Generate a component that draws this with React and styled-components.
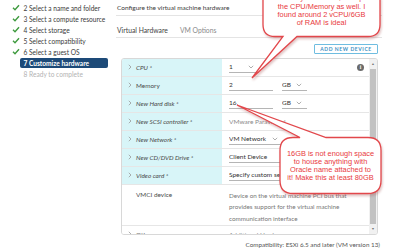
import React from 'react';
import styled, { createGlobalStyle } from 'styled-components';

const GlobalStyle = createGlobalStyle`
  html, body {
    margin: 0;
    padding: 0;
    background: #fff;
    overflow: hidden;
  }
  body {
    font-family: Lato, "Open Sans", sans-serif;
    color: #333;
  }
`;

const steps = [
  { n: 2, label: 'Select a name and folder', done: true },
  { n: 3, label: 'Select a compute resource', done: true },
  { n: 4, label: 'Select storage', done: true },
  { n: 5, label: 'Select compatibility', done: true },
  { n: 6, label: 'Select a guest OS', done: true },
  { n: 7, label: 'Customize hardware', active: true },
  { n: 8, label: 'Ready to complete', disabled: true },
];

function Check() {
  return (
    <svg width="8" height="7" viewBox="0 0 8 7">
      <path d="M1 3.8 L3 5.7 L7 1.2" fill="none" stroke="#3d9a3d" strokeWidth="1.4" />
    </svg>
  );
}

function Chevron() {
  return (
    <svg width="4" height="6" viewBox="0 0 4 6">
      <path d="M0.8 0.8 L3 3 L0.8 5.2" fill="none" stroke="#999" strokeWidth="0.8" />
    </svg>
  );
}

function Caret() {
  return (
    <svg width="6" height="4" viewBox="0 0 6 4">
      <path d="M0.8 0.8 L3 3 L5.2 0.8" fill="none" stroke="#9a9a9a" strokeWidth="0.8" />
    </svg>
  );
}

const rows = [
  { label: 'CPU *', italic: true, kind: 'select', value: '1', width: 30, info: true },
  { label: 'Memory', kind: 'size', value: '2' },
  { label: 'New Hard disk *', italic: true, kind: 'size', value: '16' },
  { label: 'New SCSI controller *', italic: true, kind: 'text', value: 'VMware Paravirtual' },
  { label: 'New Network *', italic: true, kind: 'select', value: 'VM Network', width: 54 },
  { label: 'New CD/DVD Drive *', italic: true, kind: 'select', value: 'Client Device', width: 80 },
  { label: 'Video card *', italic: true, kind: 'select', value: 'Specify custom settings', width: 94 },
];

export default function App() {
  return (
    <Page>
      <GlobalStyle />
      <Sidebar>
        {steps.map(s => (
          <Step key={s.n}>
            <CheckCell>{s.done && <Check />}</CheckCell>
            <StepLabel active={s.active} disabled={s.disabled}>
              {s.n} {s.label}
            </StepLabel>
          </Step>
        ))}
      </Sidebar>

      <Main>
        <Title>Configure the virtual machine hardware</Title>
        <Tabs>
          <Tab active>Virtual Hardware</Tab>
          <Tab>VM Options</Tab>
        </Tabs>
        <Toolbar>
          <AddButton>Add New Device</AddButton>
        </Toolbar>

        <Panel>
          <Grid>
            {rows.map(r => (
              <Row key={r.label}>
                <LabelCell highlight>
                  <Chevron />
                  <LabelText italic={r.italic}>{r.label}</LabelText>
                </LabelCell>
                <ValueCell>
                  {r.kind === 'select' && (
                    <Field w={r.width}>
                      <span>{r.value}</span>
                      <Caret />
                    </Field>
                  )}
                  {r.kind === 'size' && (
                    <>
                      <Field w={44}>
                        <span>{r.value}</span>
                      </Field>
                      <Field w={25} gap>
                        <span>GB</span>
                        <Caret />
                      </Field>
                    </>
                  )}
                  {r.kind === 'text' && <Muted>{r.value}</Muted>}
                  {r.info && <Info>i</Info>}
                </ValueCell>
              </Row>
            ))}
            <Row tall>
              <LabelCell top>
                <Spacer />
                <LabelText>VMCI device</LabelText>
              </LabelCell>
              <ValueCell top>
                <Description>
                  Device on the virtual machine PCI bus that
                  <br />
                  provides support for the virtual machine
                  <br />
                  communication interface
                </Description>
              </ValueCell>
            </Row>
            <Row>
              <LabelCell>
                <Chevron />
                <LabelText>Other</LabelText>
              </LabelCell>
              <ValueCell>
                <Muted>Additional Hardware</Muted>
              </ValueCell>
            </Row>
          </Grid>
          <Scrollbar>
            <ScrollArrow>▲</ScrollArrow>
            <Thumb />
            <ScrollArrow>▼</ScrollArrow>
          </Scrollbar>
        </Panel>

        <Footer>Compatibility: ESXi 6.5 and later (VM version 13)</Footer>
      </Main>

      <Callouts width="400" height="250" viewBox="0 0 400 250">
        <path d="M275 -12 H368 Q380 -12 380 0 V24.5 Q380 36.5 368 36.5 H297 L252 78 L283 36.5 H275 Q263 36.5 263 24.5 V0 Q263 -12 275 -12 Z" />
        <path d="M293 137.5 H300 L237 105 L326 137.5 H368 Q381 137.5 381 150.5 V180.5 Q381 193.5 368 193.5 H293 Q280 193.5 280 180.5 V150.5 Q280 137.5 293 137.5 Z" />
      </Callouts>
      <CalloutText x={263} y={-5.7} w={117} lh={8.3}>
        While you are at it, fire up
        <br />
        the CPU/Memory as well. I
        <br />
        found around 2 vCPU/6GB
        <br />
        of RAM is ideal
      </CalloutText>
      <CalloutText x={280} y={150} w={101} lh={8}>
        16GB is not enough space
        <br />
        to house anything with
        <br />
        Oracle name attached to
        <br />
        it! Make this at least 80GB
      </CalloutText>
    </Page>
  );
}

const Page = styled.div`
  position: relative;
  display: flex;
  width: 400px;
  height: 250px;
  overflow: hidden;
`;

const Sidebar = styled.nav`
  width: 112px;
  padding-top: 2px;
  flex-shrink: 0;
`;

const Step = styled.div`
  display: flex;
  align-items: center;
  height: 11px;
  margin-left: 12px;
`;

const CheckCell = styled.div`
  width: 8px;
  height: 7px;
  display: flex;
`;

const StepLabel = styled.div`
  width: 88px;
  height: 10px;
  line-height: 10px;
  padding-left: 3.5px;
  box-sizing: border-box;
  border-radius: 2px;
  font-size: 6.6px;
  white-space: nowrap;
  background: ${p => (p.active ? '#1d4a78' : 'transparent')};
  color: ${p => (p.active ? '#fff' : p.disabled ? '#b3b3b3' : '#3a3a3a')};
  font-weight: ${p => (p.active ? 700 : 400)};
`;

const Main = styled.main`
  width: 266px;
  margin-left: 4px;
  display: flex;
  flex-direction: column;
`;

const Title = styled.div`
  height: 15px;
  line-height: 15px;
  font-size: 6.5px;
  color: #3a3a3a;
  border-bottom: 1px solid #e4e4e4;
  padding-left: 1px;
`;

const Tabs = styled.div`
  display: flex;
  gap: 12px;
  margin-top: 8px;
  height: 13px;
  line-height: 12px;
  border-bottom: 1px solid #e4e4e4;
  padding-left: 1px;
`;

const Tab = styled.div`
  font-size: 6.8px;
  color: ${p => (p.active ? '#444' : '#8a8a8a')};
`;

const Toolbar = styled.div`
  display: flex;
  justify-content: flex-end;
  margin-top: 6px;
  padding-right: 4px;
`;

const AddButton = styled.button`
  width: 64px;
  height: 10px;
  padding: 0;
  border: 1px solid #6fbde0;
  border-radius: 1px;
  background: #fff;
  color: #3a8fc4;
  font-family: Lato, sans-serif;
  font-size: 5px;
  font-weight: 700;
  letter-spacing: 0.6px;
  text-transform: uppercase;
  line-height: 8px;
`;

const Panel = styled.div`
  display: flex;
  margin: 4px 4px 0 5px;
  height: 178px;
  border: 1px solid #d8d8d8;
  border-radius: 3px;
  box-sizing: border-box;
  overflow: hidden;
`;

const Grid = styled.div`
  flex: 1;
  display: flex;
  flex-direction: column;
`;

const Row = styled.div`
  display: flex;
  flex-shrink: 0;
  height: ${p => (p.tall ? '41px' : '18px')};
  border-bottom: 1px solid #e6e6e6;
  box-sizing: border-box;
`;

const LabelCell = styled.div`
  width: 100px;
  display: flex;
  align-items: ${p => (p.top ? 'flex-start' : 'center')};
  gap: 4px;
  padding: ${p => (p.top ? '6px 0 0 6px' : '0 0 0 6px')};
  box-sizing: border-box;
  background: ${p => (p.highlight ? '#d8f5f8' : '#fff')};
`;

const Spacer = styled.div`
  width: 4px;
`;

const LabelText = styled.span`
  font-size: 6.4px;
  color: #4a4a4a;
  font-style: ${p => (p.italic ? 'italic' : 'normal')};
  white-space: nowrap;
`;

const ValueCell = styled.div`
  flex: 1;
  display: flex;
  align-items: ${p => (p.top ? 'flex-start' : 'center')};
  padding: ${p => (p.top ? '5px 5px 0 7px' : '0 5px 0 7px')};
  font-size: 6.5px;
  color: #333;
  white-space: nowrap;
`;

const Field = styled.div`
  width: ${p => p.w}px;
  height: 12px;
  margin-left: ${p => (p.gap ? '9px' : '0')};
  display: flex;
  align-items: center;
  justify-content: space-between;
  gap: 3px;
  border-bottom: 1px solid #b5b5b5;
  box-sizing: border-box;
  padding-right: 5px;
  overflow: hidden;
`;

const Muted = styled.span`
  color: #8a8a8a;
`;

const Description = styled.div`
  font-size: 6.3px;
  line-height: 11.5px;
  color: #777;
`;

const Info = styled.div`
  margin-left: auto;
  width: 7px;
  height: 7px;
  border-radius: 50%;
  background: #6b6b6b;
  color: #fff;
  font-family: "Liberation Serif", serif;
  font-weight: 700;
  font-size: 5.5px;
  line-height: 7px;
  text-align: center;
`;

const Scrollbar = styled.div`
  width: 8px;
  display: flex;
  flex-direction: column;
  align-items: center;
  background: #f1f1f1;
  padding: 1px 0;
`;

const ScrollArrow = styled.div`
  font-size: 3.5px;
  color: #777;
  height: 8px;
  line-height: 8px;
`;

const Thumb = styled.div`
  flex: 1;
  width: 6px;
  margin: 1px 0;
  background: #c2c2c2;
`;

const Footer = styled.div`
  margin-top: 5px;
  height: 10px;
  line-height: 10px;
  text-align: right;
  padding-right: 2px;
  font-size: 6.3px;
  color: #555;
  white-space: nowrap;
`;

const Callouts = styled.svg`
  position: absolute;
  left: 0;
  top: 0;
  overflow: visible;
  pointer-events: none;
  filter: drop-shadow(1px 2px 1px rgba(170, 90, 90, 0.35));
  path {
    fill: #fff;
    stroke: #e2474b;
    stroke-width: 1.3;
  }
`;

const CalloutText = styled.div`
  position: absolute;
  left: ${p => p.x}px;
  top: ${p => p.y}px;
  width: ${p => p.w}px;
  line-height: ${p => p.lh}px;
  text-align: center;
  font-family: "Liberation Sans", Arial, sans-serif;
  font-size: 7.4px;
  color: #e8393d;
  white-space: nowrap;
`;
